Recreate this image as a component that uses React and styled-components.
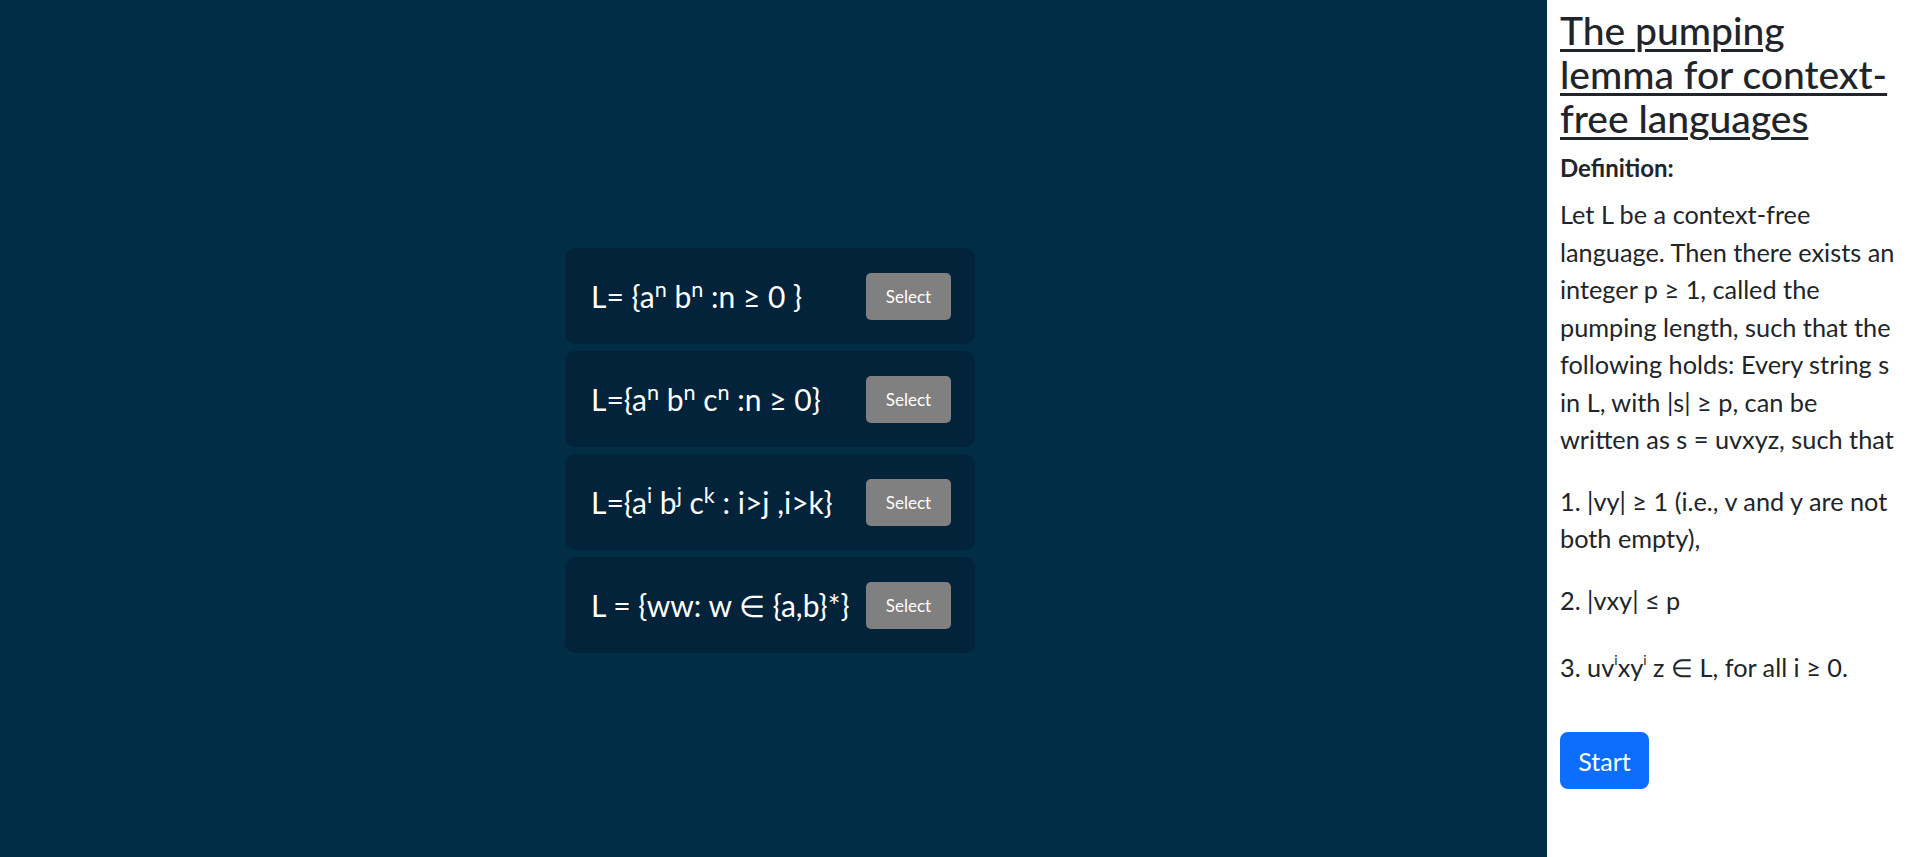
import React from "react";
import styled, { createGlobalStyle } from "styled-components";

const GlobalStyle = createGlobalStyle`
  html, body {
    margin: 0;
    padding: 0;
  }
  body {
    font-family: Lato, "Open Sans", sans-serif;
    color: #212529;
  }
  * {
    box-sizing: border-box;
  }
`;

const Page = styled.div`
  display: flex;
  height: 100vh;
  min-height: 857px;
`;

const Stage = styled.main`
  flex: 1;
  background: #012d45;
  display: flex;
  justify-content: center;
  align-items: center;
  padding: 44px 7px 0 0;
`;

const LanguageList = styled.div`
  width: 410px;
  display: flex;
  flex-direction: column;
  gap: 7px;
`;

const LanguageCard = styled.div`
  height: 96px;
  background: #02233a;
  border-radius: 10px;
  display: flex;
  align-items: center;
  justify-content: space-between;
  padding: 0 24px 0 26px;
`;

const Formula = styled.span`
  color: #ffffff;
  font-size: 30px;
  white-space: nowrap;

  sup {
    font-size: 72%;
    line-height: 0;
    vertical-align: 0.5em;
  }
`;

const SelectButton = styled.button`
  width: 85px;
  height: 47px;
  border: none;
  border-radius: 5px;
  background: #808080;
  color: #ffffff;
  font-family: inherit;
  font-size: 17px;
  cursor: pointer;
`;

const Sidebar = styled.aside`
  width: 366px;
  background: #ffffff;
  padding: 8px 12px 0 13px;
`;

const Title = styled.h1`
  margin: 0 0 12px;
  font-size: 39px;
  line-height: 44px;
  font-weight: 500;
  text-decoration: underline;
  text-decoration-thickness: 3px;
  text-underline-offset: 4px;
`;

const Subtitle = styled.h5`
  margin: 0 0 12px;
  font-size: 24px;
  line-height: 32px;
  font-weight: 700;
`;

const Text = styled.p`
  margin: 0 0 24px;
  font-size: 25.3px;
  line-height: 37.5px;

  sup {
    font-size: 55%;
    line-height: 2.4;
    vertical-align: 0.85em;
  }
`;

const StartButton = styled.button`
  margin-top: 22px;
  width: 89px;
  height: 57px;
  border: none;
  border-radius: 8px;
  background: #0d6efd;
  color: #ffffff;
  font-family: inherit;
  font-size: 25px;
  cursor: pointer;
`;

const languages = [
  <>L= {"{"}a<sup>n</sup> b<sup>n</sup> :n ≥ 0 {"}"}</>,
  <>L={"{"}a<sup>n</sup> b<sup>n</sup> c<sup>n</sup> :n ≥ 0{"}"}</>,
  <>L={"{"}a<sup>i</sup> b<sup>j</sup> c<sup>k</sup> : i&gt;j ,i&gt;k{"}"}</>,
  <>L = {"{"}ww: w ∈ {"{"}a,b{"}"}*{"}"}</>,
];

export default function App() {
  return (
    <>
      <GlobalStyle />
      <Page>
        <Stage>
          <LanguageList>
            {languages.map((lang, i) => (
              <LanguageCard key={i}>
                <Formula>{lang}</Formula>
                <SelectButton>Select</SelectButton>
              </LanguageCard>
            ))}
          </LanguageList>
        </Stage>
        <Sidebar>
          <Title>The pumping lemma for context-free languages</Title>
          <Subtitle>Definition:</Subtitle>
          <Text>
            Let L be a context-free language. Then there exists an integer p ≥ 1, called the
            pumping length, such that the following holds: Every string s in L, with |s| ≥ p,
            can be written as s = uvxyz, such that
          </Text>
          <Text>1. |vy| ≥ 1 (i.e., v and y are not both empty),</Text>
          <Text>2. |vxy| ≤ p</Text>
          <Text>
            3. uv<sup>i</sup>xy<sup>i</sup> z ∈ L, for all i ≥ 0.
          </Text>
          <StartButton>Start</StartButton>
        </Sidebar>
      </Page>
    </>
  );
}
